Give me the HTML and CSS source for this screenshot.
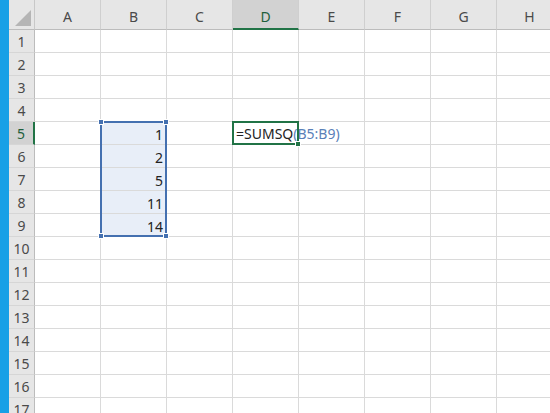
FILE: index.html
```html
<!DOCTYPE html>
<html>
<head>
<meta charset="utf-8">
<link rel="stylesheet" href="styles.css">
</head>
<body>
<div class="app">
  <div class="strip"></div>
  <div class="sheet">
    <div class="corner"><span class="tri"></span></div>
    <div class="ch">A</div><div class="ch">B</div><div class="ch">C</div><div class="ch ch-act">D</div><div class="ch">E</div><div class="ch">F</div><div class="ch">G</div><div class="ch">H</div>

    <div class="rh">1</div><div class="c"></div><div class="c"></div><div class="c"></div><div class="c"></div><div class="c"></div><div class="c"></div><div class="c"></div><div class="c"></div>
    <div class="rh">2</div><div class="c"></div><div class="c"></div><div class="c"></div><div class="c"></div><div class="c"></div><div class="c"></div><div class="c"></div><div class="c"></div>
    <div class="rh">3</div><div class="c"></div><div class="c"></div><div class="c"></div><div class="c"></div><div class="c"></div><div class="c"></div><div class="c"></div><div class="c"></div>
    <div class="rh">4</div><div class="c"></div><div class="c"></div><div class="c"></div><div class="c"></div><div class="c"></div><div class="c"></div><div class="c"></div><div class="c"></div>
    <div class="rh rh-act">5</div><div class="c"></div><div class="c sel num anchor">1<div class="range"><span class="h h-tl"></span><span class="h h-tr"></span><span class="h h-bl"></span><span class="h h-br"></span></div></div><div class="c"></div><div class="c formula">=SUMSQ<span class="ref">(B5:B9)</span><span class="caret"></span><div class="active"><span class="fill"></span></div></div><div class="c"></div><div class="c"></div><div class="c"></div><div class="c"></div>
    <div class="rh">6</div><div class="c"></div><div class="c sel num">2</div><div class="c"></div><div class="c"></div><div class="c"></div><div class="c"></div><div class="c"></div><div class="c"></div>
    <div class="rh">7</div><div class="c"></div><div class="c sel num">5</div><div class="c"></div><div class="c"></div><div class="c"></div><div class="c"></div><div class="c"></div><div class="c"></div>
    <div class="rh">8</div><div class="c"></div><div class="c sel num">11</div><div class="c"></div><div class="c"></div><div class="c"></div><div class="c"></div><div class="c"></div><div class="c"></div>
    <div class="rh">9</div><div class="c"></div><div class="c sel num">14</div><div class="c"></div><div class="c"></div><div class="c"></div><div class="c"></div><div class="c"></div><div class="c"></div>
    <div class="rh">10</div><div class="c"></div><div class="c"></div><div class="c"></div><div class="c"></div><div class="c"></div><div class="c"></div><div class="c"></div><div class="c"></div>
    <div class="rh">11</div><div class="c"></div><div class="c"></div><div class="c"></div><div class="c"></div><div class="c"></div><div class="c"></div><div class="c"></div><div class="c"></div>
    <div class="rh">12</div><div class="c"></div><div class="c"></div><div class="c"></div><div class="c"></div><div class="c"></div><div class="c"></div><div class="c"></div><div class="c"></div>
    <div class="rh">13</div><div class="c"></div><div class="c"></div><div class="c"></div><div class="c"></div><div class="c"></div><div class="c"></div><div class="c"></div><div class="c"></div>
    <div class="rh">14</div><div class="c"></div><div class="c"></div><div class="c"></div><div class="c"></div><div class="c"></div><div class="c"></div><div class="c"></div><div class="c"></div>
    <div class="rh">15</div><div class="c"></div><div class="c"></div><div class="c"></div><div class="c"></div><div class="c"></div><div class="c"></div><div class="c"></div><div class="c"></div>
    <div class="rh">16</div><div class="c"></div><div class="c"></div><div class="c"></div><div class="c"></div><div class="c"></div><div class="c"></div><div class="c"></div><div class="c"></div>
    <div class="rh">17</div><div class="c"></div><div class="c"></div><div class="c"></div><div class="c"></div><div class="c"></div><div class="c"></div><div class="c"></div><div class="c"></div>
  </div>
</div>
</body>
</html>
```
FILE: styles.css
```css
* { box-sizing: border-box; }
html, body { margin: 0; padding: 0; }
body {
  width: 550px;
  height: 413px;
  overflow: hidden;
  background: #fff;
  font-family: "Noto Sans", "Noto Sans CJK JP", sans-serif;
}
.app {
  display: flex;
  width: 550px;
  height: 413px;
  overflow: hidden;
}
.strip {
  flex: 0 0 9px;
  background: #18a0e6;
}
.sheet {
  display: grid;
  grid-template-columns: 26px repeat(8, 66px);
  grid-template-rows: 30px;
  grid-auto-rows: 23px;
  flex: 0 0 auto;
}
.corner {
  background: #e6e6e6;
  border-right: 1px solid #c8c8c8;
  border-bottom: 1px solid #bcbcbc;
  position: relative;
}
.tri {
  position: absolute;
  right: 3px;
  bottom: 3px;
  width: 0;
  height: 0;
  border-left: 16px solid transparent;
  border-bottom: 16px solid #b5b5b5;
}
.ch {
  background: #e6e6e6;
  border-right: 1px solid #cfcfcf;
  border-bottom: 1px solid #bcbcbc;
  display: flex;
  align-items: center;
  justify-content: center;
  padding-top: 4px;
  font-size: 14px;
  color: #4a4a4a;
}
.ch-act {
  background: #d2d2d2;
  border-bottom: 2px solid #217346;
  color: #1f5f3c;
}
.rh {
  background: #e6e6e6;
  border-right: 1px solid #bcbcbc;
  border-bottom: 1px solid #d6d6d6;
  display: flex;
  align-items: center;
  justify-content: center;
  font-size: 14px;
  color: #4a4a4a;
}
.rh-act {
  background: #d2d2d2;
  border-right: 2px solid #217346;
  color: #1f5f3c;
}
.c {
  border-right: 1px solid #dadada;
  border-bottom: 1px solid #dadada;
  font-size: 14px;
  color: #222;
  display: flex;
  align-items: center;
  white-space: nowrap;
}
.sel { background: #e8eef8; }
.num {
  justify-content: flex-end;
  padding-right: 3px;
  padding-top: 2px;
}
.anchor { position: relative; }
.formula {
  overflow: visible;
  padding-left: 3px;
  padding-top: 1px;
  font-size: 14px;
  color: #222;
  position: relative;
  z-index: 3;
  background: #fff;
}
.ref { color: #5a80b8; }
.caret {
  display: inline-block;
  width: 1px;
  height: 19px;
  background: #222;
  margin-left: 3px;
}
.range {
  position: absolute;
  left: -1px;
  top: -1px;
  width: 67px;
  height: 116px;
  border: 2px solid #4470b0;
  pointer-events: none;
  z-index: 2;
}
.h {
  position: absolute;
  width: 6px;
  height: 6px;
  background: #4470b0;
  border: 1px solid #fff;
}
.h-tl { left: -4px; top: -4px; }
.h-tr { right: -4px; top: -4px; }
.h-bl { left: -4px; bottom: -4px; }
.h-br { right: -4px; bottom: -4px; }
.active {
  position: absolute;
  left: -1px;
  top: -1px;
  width: 67px;
  height: 24px;
  border: 2px solid #217346;
  pointer-events: none;
}
.fill {
  position: absolute;
  right: -4px;
  bottom: -4px;
  width: 6px;
  height: 6px;
  background: #217346;
  border: 1px solid #fff;
}
```
